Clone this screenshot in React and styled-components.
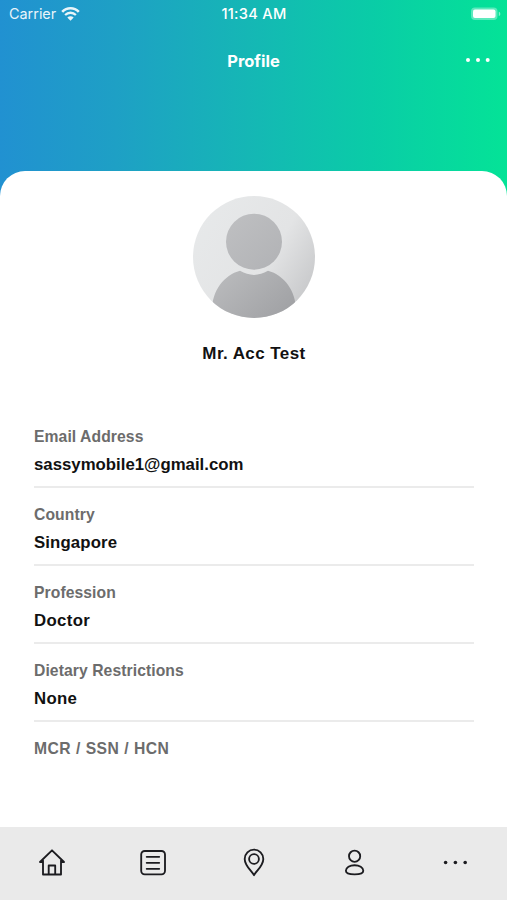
import React from "react";
import styled, { createGlobalStyle } from "styled-components";

const GlobalStyle = createGlobalStyle`
  * {
    box-sizing: border-box;
  }

  body {
    margin: 0;
    background: #fff;
    font-family: "Liberation Sans", Arial, sans-serif;
  }
`;

const Screen = styled.div`
  height: 100vh;
  display: flex;
  flex-direction: column;
  overflow: hidden;
  background: linear-gradient(
      90deg,
      #2191d1 0%,
      #1ea0c5 23%,
      #15b7b5 49%,
      #0acca7 73%,
      #04e397 100%
    )
    top / 100% 240px no-repeat;
`;

const StatusBar = styled.div`
  display: grid;
  grid-template-columns: 1fr auto 1fr;
  align-items: center;
  height: 27px;
  padding: 0 6px 0 9px;
  color: #fff;
  font-family: Inter, sans-serif;
`;

const Carrier = styled.div`
  display: flex;
  align-items: center;
  gap: 5px;
  font-size: 14.4px;
  opacity: 0.9;
`;

const Clock = styled.div`
  margin-right: 2px;
  font-size: 14.6px;
  font-weight: 500;
  letter-spacing: 0.3px;
`;

const BatteryIcon = styled.svg`
  justify-self: end;
`;

const Header = styled.header`
  flex: none;
  display: grid;
  grid-template-columns: 1fr auto 1fr;
  align-items: center;
  height: 66px;
  margin-bottom: 78px;
  padding: 0 16px;
  color: #fff;
`;

const Title = styled.h1`
  grid-column: 2;
  margin: 0;
  padding-top: 1px;
  font-family: Inter, sans-serif;
  font-size: 16.5px;
  font-weight: 700;
`;

const MoreButton = styled.button`
  justify-self: end;
  display: flex;
  padding: 0;
  border: 0;
  background: none;
  color: inherit;
`;

const Card = styled.main`
  flex: 1;
  min-height: 0;
  display: flex;
  flex-direction: column;
  padding: 25px 33px 0 34px;
  border-radius: 25px 25px 0 0;
  background: #fff;
`;

const Avatar = styled.svg`
  flex: none;
  align-self: center;
`;

const Name = styled.h2`
  margin: 26px 0 62px;
  color: #111;
  font-size: 17px;
  line-height: 20px;
  letter-spacing: 0.42px;
  text-align: center;
`;

const Field = styled.div`
  flex: none;
  height: 78.1px;
  padding-top: 1px;
`;

const Label = styled.div`
  color: #6c6c6c;
  font-size: 15.7px;
  font-weight: 700;
  line-height: 20px;
  letter-spacing: ${(props) => props.$tracking || 0.08}px;
`;

const Value = styled.div`
  height: 41px;
  padding-top: 8px;
  border-bottom: 2px solid #ebebeb;
  color: #111;
  font-size: 16.8px;
  font-weight: 700;
  line-height: 20px;
  letter-spacing: ${(props) => props.$tracking || 0}px;
`;

const TabBar = styled.nav`
  flex: none;
  display: grid;
  grid-template-columns: repeat(5, 1fr);
  height: 73px;
  padding-left: 1px;
  background: #eaeaea;
`;

const Tab = styled.button`
  display: flex;
  justify-content: center;
  padding: 19px 0 0;
  border: 0;
  background: none;
  color: #1c1c20;
`;

const TabIcon = styled.svg.attrs({ width: 32, height: 32, viewBox: "0 0 32 32" })`
  fill: none;
  stroke: currentColor;
  stroke-width: 1.85;
  stroke-linejoin: round;
  stroke-linecap: round;
`;

const fields = [
  { label: "Email Address", value: "sassymobile1@gmail.com" },
  { label: "Country", value: "Singapore", valueTracking: 0.12 },
  { label: "Profession", value: "Doctor", valueTracking: 0.35 },
  { label: "Dietary Restrictions", value: "None", valueTracking: 0.3 },
  { label: "MCR / SSN / HCN", labelTracking: 0.48 },
];

const Wifi = () => (
  <svg width="19" height="14" viewBox="0 0 19 14" fill="none" stroke="#fff">
    <path d="M1.2 4.9C5.8 .1 13.2 .1 17.8 4.9" strokeWidth="2.6" />
    <path d="M4.1 8C7.2 5 11.8 5 14.9 8" strokeWidth="2.3" />
    <path d="M6.3 10.5C8.1 8.7 10.9 8.7 12.7 10.5L9.5 13.7Z" fill="#fff" stroke="none" />
  </svg>
);

const Battery = () => (
  <BatteryIcon width="31" height="14" viewBox="0 0 31 14">
    <rect x="1" y="0.5" width="26.5" height="12.6" rx="4" fill="#fff" opacity="0.35" />
    <rect x="3" y="2.5" width="22.5" height="8.6" rx="2" fill="#fff" />
    <path d="M28.8 4.7v4.4c2-.6 2-3.8 0-4.4Z" fill="#fff" opacity="0.5" />
  </BatteryIcon>
);

const Person = () => (
  <Avatar width="122" height="122" viewBox="0 0 122 122">
    <defs>
      <linearGradient id="backdrop" x1="0" y1="0.2" x2="1" y2="0.8">
        <stop offset="0" stopColor="#e7e9ea" />
        <stop offset="0.6" stopColor="#e3e4e5" />
        <stop offset="1" stopColor="#c5c6c8" />
      </linearGradient>
      <linearGradient id="head" x1="0" y1="0" x2="1" y2="1">
        <stop offset="0" stopColor="#bfc0c2" />
        <stop offset="1" stopColor="#b1b2b5" />
      </linearGradient>
      <linearGradient id="torso" x1="0" y1="0" x2="1" y2="0.6">
        <stop offset="0" stopColor="#bcbdbf" />
        <stop offset="1" stopColor="#a2a3a6" />
      </linearGradient>
      <clipPath id="round">
        <circle cx="61" cy="61" r="61" />
      </clipPath>
    </defs>
    <g clipPath="url(#round)">
      <rect width="122" height="122" fill="url(#backdrop)" />
      <path
        d="M19 122V114C19 95 31 79 47 74.8Q61 83 75 74.8C91 79 103 95 103 114V122Z"
        fill="url(#torso)"
      />
      <circle cx="61" cy="45.7" r="28" fill="url(#head)" />
    </g>
  </Avatar>
);

const HomeIcon = () => (
  <TabIcon>
    <path d="M7 14.5V28.5H25V14.5M7 16H4L16 4.3L28 16H25" />
    <path d="M12.7 28V19.5H19.2V28" />
  </TabIcon>
);

const ListIcon = () => (
  <TabIcon>
    <rect x="4.2" y="5" width="23.8" height="23.3" rx="3.5" />
    <path d="M9.7 10.8H22.2M9.7 16.8H22.2M9.7 22.8H22.2" />
  </TabIcon>
);

const PinIcon = () => (
  <TabIcon>
    <path d="M16 29.2C14 25 6.7 20 6.7 12.9a9.3 9.3 0 0 1 18.6 0C25.3 20 18 25 16 29.2Z" />
    <circle cx="16" cy="13" r="4.9" />
  </TabIcon>
);

const UserIcon = () => (
  <TabIcon>
    <circle cx="15.6" cy="10.2" r="5.6" />
    <path d="M15.6 19.2C20.4 19.2 24.3 21.6 24.3 24.8S20.6 28.4 15.6 28.4S6.9 28 6.9 24.8S10.8 19.2 15.6 19.2Z" />
  </TabIcon>
);

const DotsIcon = () => (
  <TabIcon>
    <g fill="currentColor" stroke="none">
      <circle cx="5.6" cy="16.5" r="1.8" />
      <circle cx="15.4" cy="16.5" r="1.8" />
      <circle cx="25.2" cy="16.5" r="1.8" />
    </g>
  </TabIcon>
);

const tabs = [
  { name: "home", Icon: HomeIcon },
  { name: "list", Icon: ListIcon },
  { name: "pin", Icon: PinIcon },
  { name: "user", Icon: UserIcon },
  { name: "dots", Icon: DotsIcon },
];

const App = () => {
  return (
    <Screen>
      <GlobalStyle />
      <StatusBar>
        <Carrier>
          Carrier
          <Wifi />
        </Carrier>
        <Clock>11:34 AM</Clock>
        <Battery />
      </StatusBar>
      <Header>
        <Title>Profile</Title>
        <MoreButton>
          <svg width="26" height="6" viewBox="0 0 26 6" fill="currentColor">
            <circle cx="3" cy="3" r="2" />
            <circle cx="13" cy="3" r="2" />
            <circle cx="22.7" cy="3" r="2" />
          </svg>
        </MoreButton>
      </Header>
      <Card>
        <Person />
        <Name>Mr. Acc Test</Name>
        {fields.map(({ label, value, labelTracking, valueTracking }) => (
          <Field key={label}>
            <Label $tracking={labelTracking}>{label}</Label>
            {value && <Value $tracking={valueTracking}>{value}</Value>}
          </Field>
        ))}
      </Card>
      <TabBar>
        {tabs.map(({ name, Icon }) => (
          <Tab key={name}>
            <Icon />
          </Tab>
        ))}
      </TabBar>
    </Screen>
  );
};

export default App;
